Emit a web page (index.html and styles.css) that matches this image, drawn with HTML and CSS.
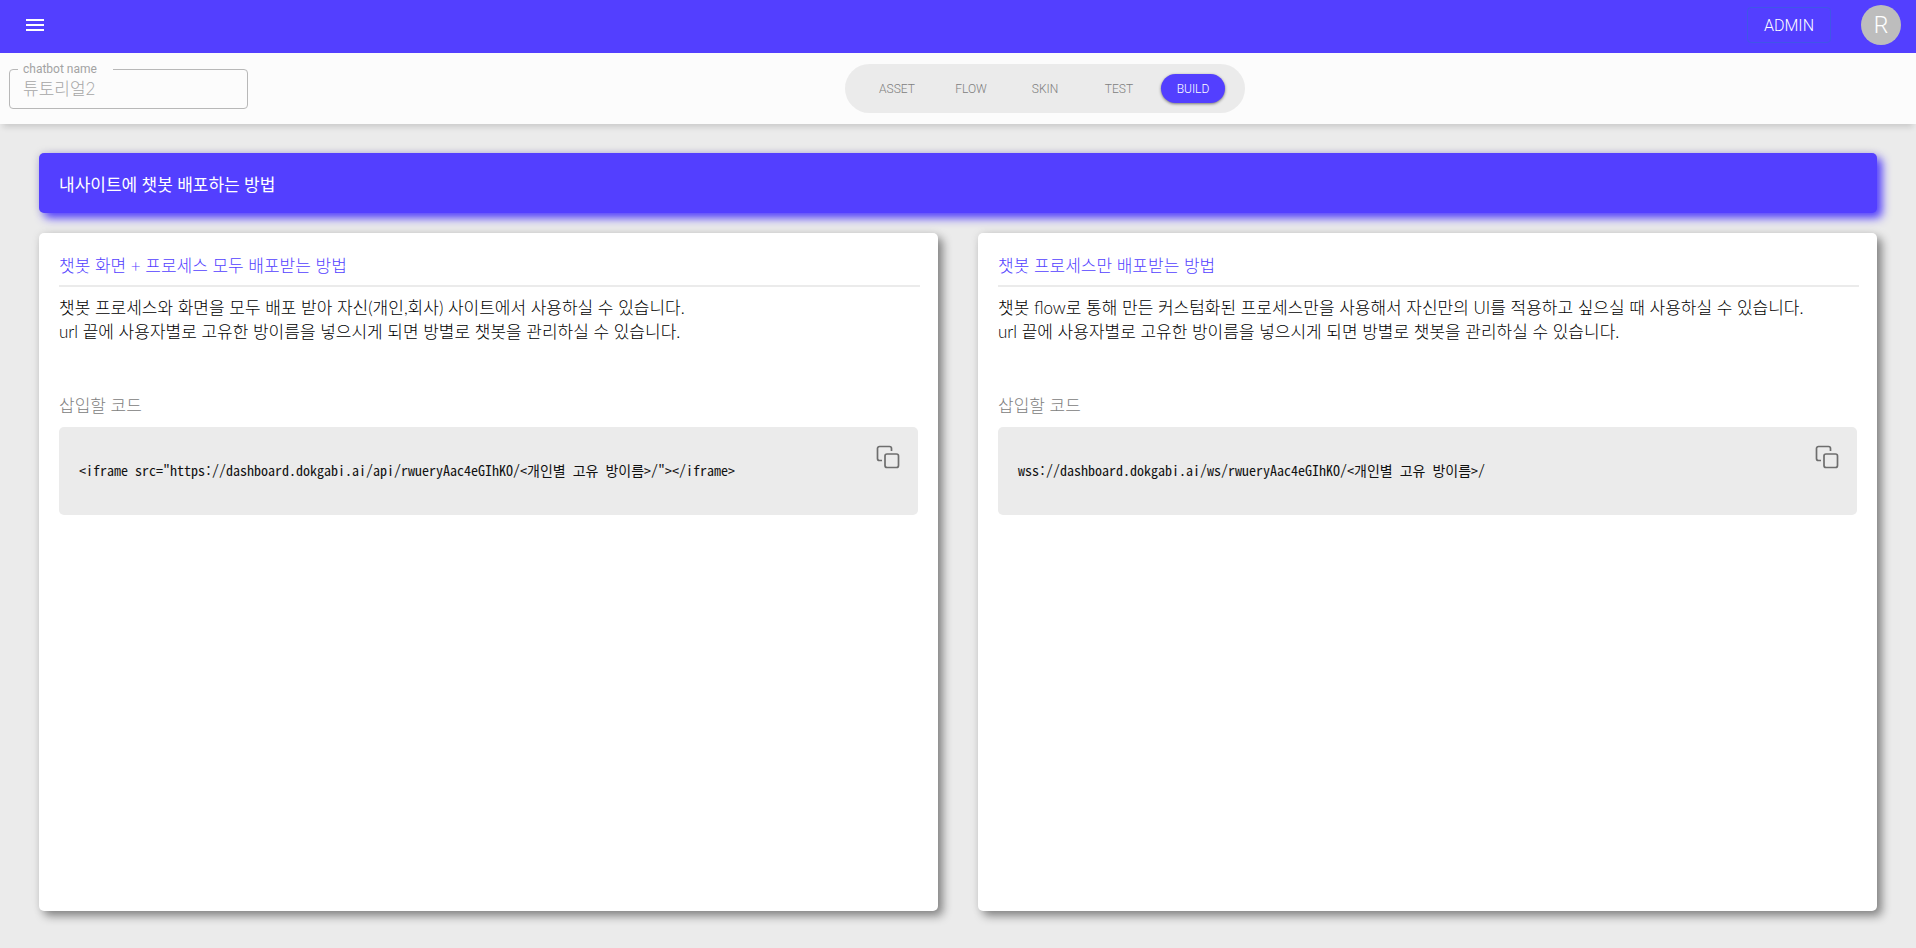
FILE: index.html
```html
<!DOCTYPE html>
<html lang="ko">
<head>
<meta charset="utf-8">
<meta name="viewport" content="width=device-width, initial-scale=1">
<title>튜토리얼2 - BUILD</title>
<link rel="stylesheet" href="styles.css">
</head>
<body>
<header class="topbar">
  <button class="menu-button" type="button" aria-label="메뉴">
    <svg width="24" height="24" viewBox="0 0 24 24" fill="currentColor" aria-hidden="true"><path d="M3 18h18v-2H3v2zm0-5h18v-2H3v2zm0-7v2h18V6H3z"/></svg>
  </button>
  <div class="account">
    <button class="admin-button" type="button">ADMIN</button>
    <button class="avatar" type="button">R</button>
  </div>
</header>

<div class="toolbar">
  <fieldset class="name-field">
    <legend><label for="chatbot-name">chatbot name</label></legend>
    <input id="chatbot-name" type="text" value="튜토리얼2" disabled>
  </fieldset>
  <div class="steps-area">
    <nav class="steps">
      <button class="step" type="button">ASSET</button>
      <button class="step" type="button">FLOW</button>
      <button class="step" type="button">SKIN</button>
      <button class="step" type="button">TEST</button>
      <button class="step step-active" type="button" aria-current="page">BUILD</button>
    </nav>
  </div>
</div>

<main class="content">
  <h1 class="banner">내사이트에 챗봇 배포하는 방법</h1>
  <div class="cards">
    <section class="card">
      <h2 class="card-title">챗봇 화면 + 프로세스 모두 배포받는 방법</h2>
      <p class="card-text">챗봇 프로세스와 화면을 모두 배포 받아 자신(개인,회사) 사이트에서 사용하실 수 있습니다.<br>url 끝에 사용자별로 고유한 방이름을 넣으시게 되면 방별로 챗봇을 관리하실 수 있습니다.</p>
      <h3 class="code-label">삽입할 코드</h3>
      <div class="code-box">
        <pre class="code">&lt;iframe src="https://dashboard.dokgabi.ai/api/rwueryAac4eGIhKO/&lt;개인별 고유 방이름&gt;/"&gt;&lt;/iframe&gt;</pre>
        <button class="copy-button" type="button" aria-label="코드 복사">
          <svg width="24" height="24" viewBox="0 0 24 24" fill="none" stroke="currentColor" stroke-width="1.7" aria-hidden="true"><rect x="9" y="9" width="13.5" height="13.5" rx="2"/><path d="M15.5 6V3.5a2 2 0 0 0-2-2h-10a2 2 0 0 0-2 2v10a2 2 0 0 0 2 2H6"/></svg>
        </button>
      </div>
    </section>
    <section class="card">
      <h2 class="card-title">챗봇 프로세스만 배포받는 방법</h2>
      <p class="card-text">챗봇 flow로 통해 만든 커스텀화된 프로세스만을 사용해서 자신만의 UI를 적용하고 싶으실 때 사용하실 수 있습니다.<br>url 끝에 사용자별로 고유한 방이름을 넣으시게 되면 방별로 챗봇을 관리하실 수 있습니다.</p>
      <h3 class="code-label">삽입할 코드</h3>
      <div class="code-box">
        <pre class="code">wss://dashboard.dokgabi.ai/ws/rwueryAac4eGIhKO/&lt;개인별 고유 방이름&gt;/</pre>
        <button class="copy-button" type="button" aria-label="코드 복사">
          <svg width="24" height="24" viewBox="0 0 24 24" fill="none" stroke="currentColor" stroke-width="1.7" aria-hidden="true"><rect x="9" y="9" width="13.5" height="13.5" rx="2"/><path d="M15.5 6V3.5a2 2 0 0 0-2-2h-10a2 2 0 0 0-2 2v10a2 2 0 0 0 2 2H6"/></svg>
        </button>
      </div>
    </section>
  </div>
</main>
</body>
</html>
```
FILE: styles.css
```css
:root {
  --primary: #533fff;
  --surface: #ebebeb;
  --muted: #808080;
  --ui-font: Roboto, "Noto Sans CJK KR", sans-serif;
  --text-font: Lato, "Noto Sans CJK KR", sans-serif;
}

* {
  box-sizing: border-box;
}

body {
  margin: 0;
  min-height: 100vh;
  display: flex;
  flex-direction: column;
  background: var(--surface);
  font-family: var(--text-font);
  font-size: 17px;
  font-weight: 300;
  line-height: 24px;
  color: #000;
}

button {
  border: 0;
  padding: 0;
  background: none;
  color: inherit;
  font-family: var(--ui-font);
  font-weight: 300;
  cursor: pointer;
}

svg {
  display: block;
}

.topbar {
  display: flex;
  align-items: center;
  justify-content: space-between;
  height: 53px;
  padding: 0 15px 3px 23px;
  background: var(--primary);
  color: #fff;
}

.account {
  display: flex;
  align-items: center;
  gap: 30px;
}

.admin-button {
  height: 36px;
  padding: 0 16px;
  border: 1px solid #3f56e8;
  border-radius: 4px;
  font-size: 16px;
}

.avatar {
  width: 40px;
  height: 40px;
  border-radius: 50%;
  background: #bdbdbd;
  font-size: 23px;
}

.toolbar {
  display: flex;
  align-items: center;
  height: 71px;
  padding: 0 74px 0 9px;
  background: #fcfcfc;
  box-shadow: 0 6px 6px -3px rgba(0, 0, 0, 0.14);
}

.name-field {
  width: 239px;
  height: 47px;
  margin: 0 0 6px;
  padding: 0 8px;
  border: 1px solid #b8b8b8;
  border-radius: 4px;
}

.name-field legend {
  padding: 0 16px 0 5px;
  font-family: Roboto, sans-serif;
  font-size: 12px;
  font-weight: 400;
  line-height: 14px;
  color: #a3a3a3;
}

.name-field input {
  display: block;
  width: 100%;
  height: 22px;
  padding: 0 5px;
  border: 0;
  background: none;
  font-family: var(--text-font);
  font-size: 17px;
  font-weight: 300;
  color: #a6a6a6;
}

.steps-area {
  flex: 1;
  display: flex;
  justify-content: center;
}

.steps {
  display: flex;
  gap: 10px;
  padding: 10px 20px;
  border-radius: 25px;
  background: var(--surface);
}

.step {
  width: 64px;
  height: 29px;
  border-radius: 15px;
  font-size: 12px;
  color: var(--muted);
}

.step-active {
  background: var(--primary);
  color: #fff;
  box-shadow: 0 1px 3px rgba(0, 0, 0, 0.5);
}

.content {
  flex: 1;
  display: flex;
  flex-direction: column;
  gap: 20px;
  padding: 29px 39px 37px;
}

.banner {
  margin: 0;
  padding: 20px 20px 16px;
  border-radius: 5px;
  background: var(--primary);
  box-shadow: 5px 5px 10px var(--primary), 0 0 10px rgba(0, 0, 0, 0.12);
  font-size: 17px;
  font-weight: 400;
  color: #fff;
}

.cards {
  flex: 1;
  display: grid;
  grid-template-columns: 1fr 1fr;
  gap: 40px;
}

.card {
  padding: 21px 20px 20px;
  border-radius: 5px;
  background: #fff;
  box-shadow: 5px 5px 10px rgba(0, 0, 0, 0.42), 0 0 10px rgba(0, 0, 0, 0.08);
}

.card-title {
  margin: 0 -2px 9px 0;
  padding-bottom: 7px;
  border-bottom: 2px solid var(--surface);
  font-size: 17px;
  font-weight: 300;
  color: var(--primary);
}

.card-text {
  margin: 0 0 50px;
}

.code-label {
  margin: 0 0 9px;
  font-size: 17px;
  font-weight: 300;
  color: var(--muted);
}

.code-box {
  display: flex;
  align-items: flex-start;
  justify-content: space-between;
  min-height: 88px;
  padding: 18px 18px 18px 20px;
  border-radius: 5px;
  background: var(--surface);
}

.code {
  margin: 13px 0 0;
  font-family: "Noto Sans Mono CJK KR", "Liberation Mono", "Noto Sans CJK KR", monospace;
  font-size: 14px;
  font-weight: 400;
  line-height: 24px;
  color: #111;
}

.copy-button {
  color: #6e6e6e;
}
```
